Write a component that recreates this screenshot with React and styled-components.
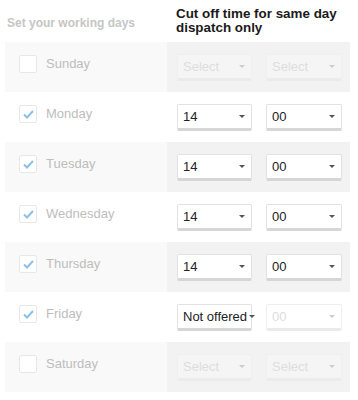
import React from "react";
import styled, { createGlobalStyle } from "styled-components";

const Global = createGlobalStyle`
  body {
    margin: 0;
    background: #ffffff;
    font-family: Arial, "Liberation Sans", sans-serif;
  }
`;

const Table = styled.div`
  display: grid;
  grid-template-columns: 162px 183px;
  padding-left: 5px;
`;

const HeadLeft = styled.div`
  height: 42px;
  display: flex;
  align-items: center;
  padding: 3px 0 0 2px;
  box-sizing: border-box;
  font-weight: bold;
  font-size: 12px;
  color: #c6c6c6;
`;

const HeadRight = styled.div`
  height: 42px;
  display: flex;
  align-items: center;
  padding-left: 9px;
  font-weight: bold;
  font-size: 13.4px;
  line-height: 14px;
  color: #1a1a1a;
`;

const DayCell = styled.div`
  height: 50px;
  display: flex;
  align-items: flex-start;
  padding: 13px 0 0 14px;
  box-sizing: border-box;
  gap: 9px;
  background: ${(p) => (p.shaded ? "#f9f9f9" : "#ffffff")};
`;

const TimeCell = styled.div`
  height: 50px;
  display: flex;
  align-items: flex-start;
  padding: 12px 0 0 10px;
  box-sizing: border-box;
  gap: 14px;
  background: ${(p) => (p.shaded ? "#f2f2f2" : "#ffffff")};
`;

const Box = styled.span`
  width: 16px;
  height: 16px;
  border: 1px solid #e8e8e8;
  border-radius: 2px;
  background: #ffffff;
  display: flex;
  align-items: center;
  justify-content: center;
`;

const DayName = styled.span`
  font-size: 13px;
  line-height: 17px;
  color: #bdbdbd;
`;

const Select = styled.div`
  width: ${(p) => p.w}px;
  height: 27px;
  box-sizing: border-box;
  border: 1px solid ${(p) => (p.off ? "#efefef" : "#e2e2e2")};
  border-bottom: 3px solid ${(p) => (p.off ? "#ebebeb" : "#d6d6d6")};
  border-radius: 2px;
  background: ${(p) => (p.off ? (p.shaded ? "#f5f5f5" : "#ffffff") : "#ffffff")};
  display: flex;
  align-items: center;
  justify-content: space-between;
  padding: 0 6px 0 5px;
  font-size: 13px;
  white-space: nowrap;
  color: ${(p) => (p.off ? "#dddddd" : "#222222")};
`;

const Caret = styled.span`
  flex: none;
  width: 0;
  height: 0;
  margin-left: 2px;
  border-left: 3px solid transparent;
  border-right: 3px solid transparent;
  border-top: 3px solid ${(p) => (p.off ? "#cccccc" : "#555555")};
`;

const Check = () => (
  <svg width="11" height="9" viewBox="0 0 11 9">
    <path d="M1 4.5 L4 7.5 L10 1" fill="none" stroke="#8cc0ea" strokeWidth="2" />
  </svg>
);

const days = [
  { name: "Sunday", on: false, h: "Select", m: "Select" },
  { name: "Monday", on: true, h: "14", m: "00" },
  { name: "Tuesday", on: true, h: "14", m: "00" },
  { name: "Wednesday", on: true, h: "14", m: "00" },
  { name: "Thursday", on: true, h: "14", m: "00" },
  { name: "Friday", on: true, h: "Not offered", m: "00", mOff: true },
  { name: "Saturday", on: false, h: "Select", m: "Select" },
];

export default function App() {
  return (
    <>
      <Global />
      <Table>
        <HeadLeft>Set your working days</HeadLeft>
        <HeadRight>
          Cut off time for same day
          <br />
          dispatch only
        </HeadRight>
        {days.map((d, i) => {
          const shaded = i % 2 === 0;
          const hOff = !d.on;
          const mOff = !d.on || d.mOff;
          return (
            <React.Fragment key={d.name}>
              <DayCell shaded={shaded}>
                <Box>{d.on && <Check />}</Box>
                <DayName>{d.name}</DayName>
              </DayCell>
              <TimeCell shaded={shaded}>
                <Select w={75} off={hOff} shaded={shaded}>
                  <span>{d.h}</span>
                  <Caret off={hOff} />
                </Select>
                <Select w={76} off={mOff} shaded={shaded}>
                  <span>{d.m}</span>
                  <Caret off={mOff} />
                </Select>
              </TimeCell>
            </React.Fragment>
          );
        })}
      </Table>
    </>
  );
}
